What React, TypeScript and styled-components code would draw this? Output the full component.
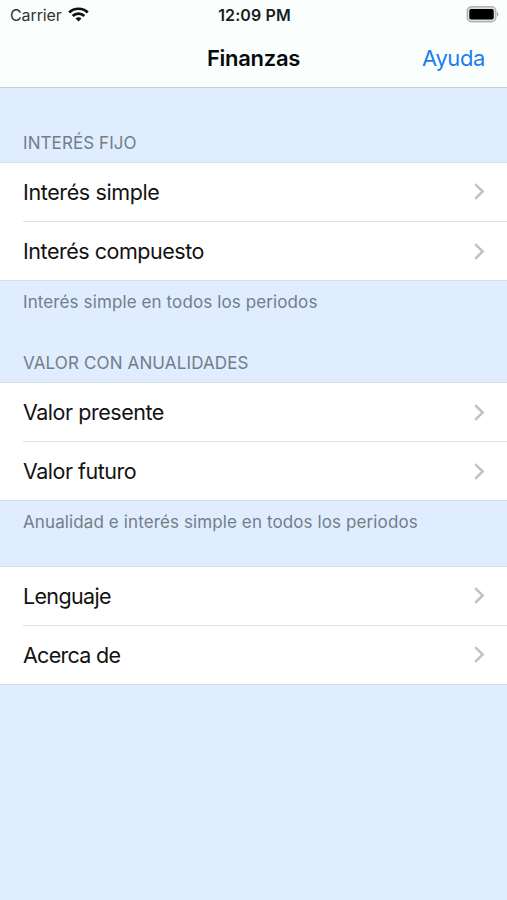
import React from "react";
import styled, { createGlobalStyle } from "styled-components";

const GlobalStyle = createGlobalStyle`
  * { box-sizing: border-box; }
  body {
    margin: 0;
    background: #e0edff;
    font-family: Inter, "Liberation Sans", sans-serif;
  }
`;

const Screen = styled.div`
  display: flex;
  flex-direction: column;
  min-height: 900px;
  background: #e0edff;
`;

const Header = styled.header`
  height: 88px;
  background: #fafffe;
  border-bottom: 1px solid #c5d0dc;
`;

const StatusBar = styled.div`
  display: grid;
  grid-template-columns: 1fr auto 1fr;
  align-items: center;
  height: 29px;
  padding: 0 8px 0 10px;
  font-size: 16px;
  line-height: 20px;
`;

const Carrier = styled.div`
  display: flex;
  align-items: center;
  gap: 6px;
  color: #303434;
  letter-spacing: -0.1px;
`;

const Clock = styled.time`
  color: #1a1d1d;
  font-weight: 600;
  letter-spacing: 0.1px;
`;

const BatterySlot = styled.div`
  display: flex;
  justify-content: flex-end;
`;

const NavBar = styled.nav`
  display: grid;
  grid-template-columns: 1fr auto 1fr;
  align-items: center;
  height: 57px;
  padding: 0 22px;
`;

const Title = styled.h1`
  grid-column: 2;
  margin: 0;
  color: #080a0a;
  font-size: 22px;
  font-weight: 600;
  line-height: 28px;
  letter-spacing: -0.3px;
`;

const NavButton = styled.a`
  justify-self: end;
  color: #1f7cf0;
  font-size: 22px;
  line-height: 28px;
  letter-spacing: -0.4px;
`;

const Section = styled.section<{ $head: number }>`
  display: grid;
  grid-template-rows: ${(p) => p.$head}px 119px auto;
`;

const SectionHeading = styled.h2<{ $track: number }>`
  align-self: end;
  margin: 0;
  padding: 0 23px 8px;
  color: #737d88;
  font-size: 17px;
  font-weight: 400;
  line-height: 22px;
  letter-spacing: ${(p) => p.$track}px;
`;

const List = styled.ul`
  grid-row: 2;
  margin: 0;
  padding: 0;
  list-style: none;
  background: #fff;
  border-top: 1px solid #d8dee8;
  border-bottom: 1px solid #d5dde5;
`;

const Row = styled.li`
  padding-left: 23px;
`;

const RowContent = styled.div<{ $divided: boolean; $track: number; $lift: number }>`
  display: flex;
  align-items: center;
  justify-content: space-between;
  height: ${(p) => (p.$divided ? 59 : 58)}px;
  padding-right: 22px;
  padding-bottom: ${(p) => p.$lift}px;
  border-bottom: ${(p) => (p.$divided ? "1px solid #dfdfe1" : "none")};
  color: #121212;
  font-size: 21.5px;
  line-height: 28px;
  letter-spacing: ${(p) => p.$track}px;
`;

const Footnote = styled.p`
  margin: 0;
  padding: 10px 23px 0;
  color: #737d88;
  font-size: 17px;
  line-height: 22px;
  letter-spacing: 0.11px;
`;

const WifiIcon = () => (
  <svg width="21" height="15" viewBox="0 0 21 15" fill="none" stroke="#111" strokeWidth="2.7">
    <path d="M1.2 5.5C6.2.5 14.8.5 19.8 5.5" />
    <path d="M4.7 9C8 5.7 13 5.7 16.3 9" />
    <path d="M10.5 14.4 7.5 11.4C9.2 9.8 11.8 9.8 13.5 11.4Z" fill="#111" stroke="none" />
  </svg>
);

const BatteryIcon = () => (
  <svg width="33" height="17" viewBox="0 0 33 17">
    <rect x="1.2" y="0.8" width="28.6" height="14.9" rx="4.2" fill="#dedfdf" stroke="#b3b3b3" strokeWidth="1.4" />
    <rect x="3.3" y="3" width="24.4" height="10.6" rx="1.8" fill="#000" />
    <path d="M31 6v4.6c1.9-.8 1.9-3.8 0-4.6Z" fill="#aaa9a9" />
  </svg>
);

const Chevron = () => (
  <svg width="11" height="17" viewBox="0 0 11 17" fill="none" stroke="#c2c2c4" strokeWidth="2.5">
    <path d="M1.2 1.2 8.7 8.5 1.2 15.8" />
  </svg>
);

type Item = { label: string; track: number; lift?: number };
type Group = { head: number; title?: string; titleTrack?: number; items: Item[]; note?: string };

const groups: Group[] = [
  {
    head: 74,
    title: "INTERÉS FIJO",
    titleTrack: 0.08,
    items: [
      { label: "Interés simple", track: -0.38, lift: 1 },
      { label: "Interés compuesto", track: -0.47 },
    ],
    note: "Interés simple en todos los periodos",
  },
  {
    head: 69,
    title: "VALOR CON ANUALIDADES",
    titleTrack: 0.14,
    items: [
      { label: "Valor presente", track: -0.47 },
      { label: "Valor futuro", track: -0.5 },
    ],
    note: "Anualidad e interés simple en todos los periodos",
  },
  {
    head: 33,
    items: [
      { label: "Lenguaje", track: -0.66, lift: 1 },
      { label: "Acerca de", track: -0.72, lift: 1 },
    ],
  },
];

export default function App() {
  return (
    <Screen>
      <GlobalStyle />
      <Header>
        <StatusBar>
          <Carrier>
            Carrier
            <WifiIcon />
          </Carrier>
          <Clock>12:09 PM</Clock>
          <BatterySlot>
            <BatteryIcon />
          </BatterySlot>
        </StatusBar>
        <NavBar>
          <Title>Finanzas</Title>
          <NavButton>Ayuda</NavButton>
        </NavBar>
      </Header>
      <main>
        {groups.map((group) => (
          <Section key={group.items[0].label} $head={group.head}>
            {group.title && <SectionHeading $track={group.titleTrack ?? 0}>{group.title}</SectionHeading>}
            <List>
              {group.items.map((item, i) => (
                <Row key={item.label}>
                  <RowContent
                    $divided={i < group.items.length - 1}
                    $track={item.track}
                    $lift={item.lift ?? 0}
                  >
                    {item.label}
                    <Chevron />
                  </RowContent>
                </Row>
              ))}
            </List>
            {group.note && <Footnote>{group.note}</Footnote>}
          </Section>
        ))}
      </main>
    </Screen>
  );
}
